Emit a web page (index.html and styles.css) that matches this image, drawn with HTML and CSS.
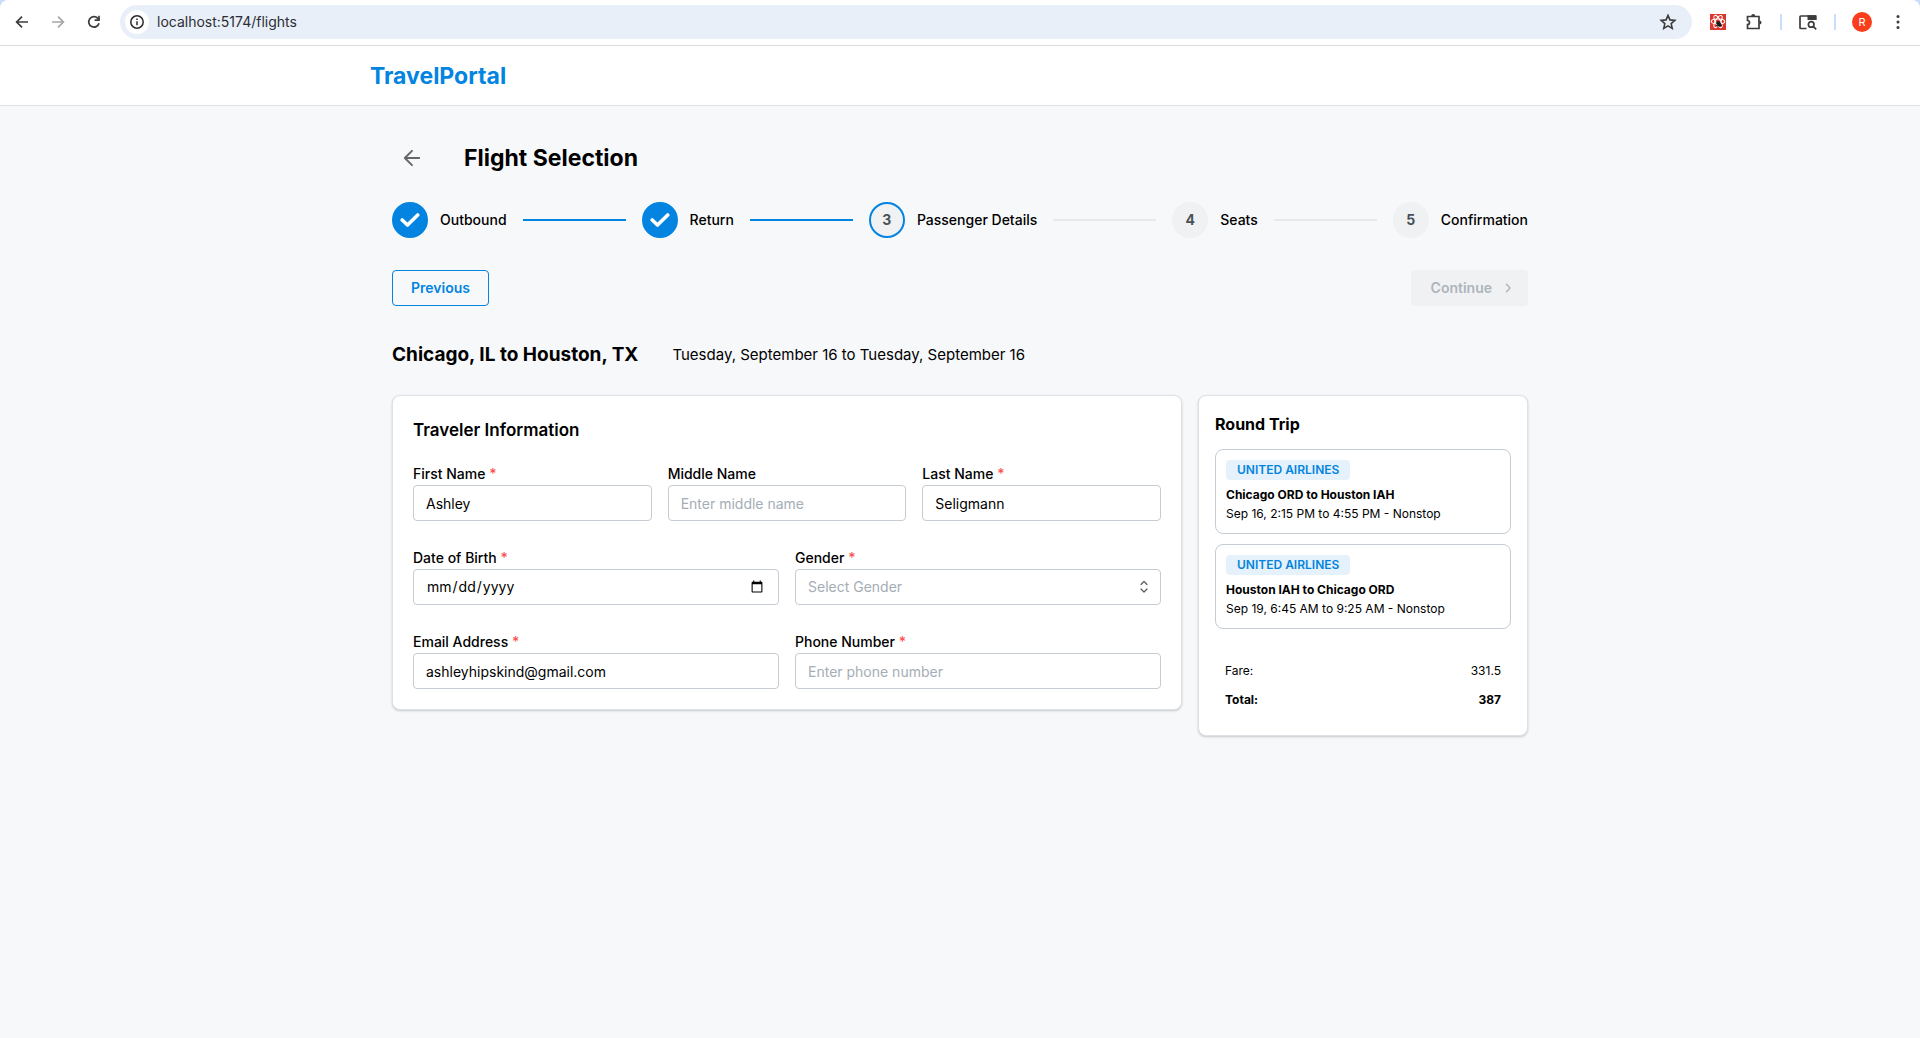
FILE: index.html
```html
<!DOCTYPE html>
<html lang="en">
<head>
<meta charset="utf-8">
<title>TravelPortal</title>
<meta name="viewport" content="width=device-width, initial-scale=1">
<link rel="stylesheet" href="styles.css">
</head>
<body>
<div class="frame">
<div class="toolbar">
  <button class="tool" type="button" aria-label="Back"><svg width="16" height="16" viewBox="0 0 16 16" fill="none" stroke="#3c3c3c" stroke-width="1.7"><path d="M14 8H3M8 2.6 2.6 8 8 13.4"/></svg></button>
  <button class="tool" type="button" aria-label="Forward"><svg width="16" height="16" viewBox="0 0 16 16" fill="none" stroke="#a6a6a6" stroke-width="1.7"><path d="M2 8h11M8 2.6 13.4 8 8 13.4"/></svg></button>
  <button class="tool" type="button" aria-label="Reload"><svg width="16" height="16" viewBox="0 0 16 16" fill="none" stroke="#3c3c3c" stroke-width="1.7"><path d="M13 9.2A5.2 5.2 0 1 1 11.8 4.4L13 5.6"/><path d="M13 1.8v4.4H8.6"/></svg></button>
  <div class="address">
    <button class="site-info" type="button" aria-label="Site information"><svg width="16" height="16" viewBox="0 0 16 16" fill="none" stroke="#2b2b2b" stroke-width="1.5"><circle cx="8" cy="8" r="6.2"/><path d="M8 7.2v4M8 4.4v1.6"/></svg></button>
    <input class="url" type="text" aria-label="Address" value="localhost:5174/flights">
    <button class="star" type="button" aria-label="Bookmark"><svg width="18" height="18" viewBox="0 0 18 18" fill="none" stroke="#3c3c3c" stroke-width="1.6"><path d="m9 2.400 1.950 4.500 4.900.45-3.700 3.250 1.100 4.800L9 12.900l-4.250 2.500 1.100-4.800-3.700-3.250 4.900-.45z"/></svg></button>
  </div>
  <div class="extensions">
    <button class="tool" type="button" aria-label="Extension"><svg width="16" height="16" viewBox="0 0 16 16"><path fill="#dc362e" d="M0 0h16v16H0z"/><g fill="none" stroke="#fff" stroke-width="1.100"><ellipse cx="8" cy="7.500" rx="6.800" ry="2.500"/><ellipse cx="8" cy="7.500" rx="6.800" ry="2.500" transform="rotate(60 8 7.500)"/><ellipse cx="8" cy="7.500" rx="6.800" ry="2.500" transform="rotate(120 8 7.500)"/></g><g stroke="#1c1c1c" fill="#1c1c1c"><ellipse cx="9" cy="10" rx="1.500" ry="2.500" transform="rotate(-40 9 10)"/><path d="m6 9 5.500 3M10 7.500 7.500 13M6 11.500h6M6.800 6.800l1.200 1.700" stroke-width=".8"/></g></svg></button>
    <button class="tool" type="button" aria-label="Extensions"><svg width="18" height="18" viewBox="0 0 18 18" fill="none" stroke="#3c3c3c" stroke-width="1.700"><path d="M2.500 3.500H14v12H2.500v-4a2 2 0 0 0 0-4z"/><path fill="#3c3c3c" stroke="none" d="M6.200 3a2 2 0 0 1 4 0zM14.500 7.500a2 2 0 0 1 0 4z"/></svg></button>
    <span class="divider"></span>
    <button class="tool" type="button" aria-label="Search tabs"><svg width="18" height="18" viewBox="0 0 18 18" fill="none" stroke="#3c3c3c" stroke-width="1.700"><path d="M7.500 15.500H1.800a.8.8 0 0 1-.8-.8V3.800a.8.8 0 0 1 .8-.8h14a.8.8 0 0 1 .8.8V7"/><path fill="#3c3c3c" stroke="none" d="M8.500 2.200h9V7h-9z"/><circle cx="12.200" cy="11.400" r="2.800"/><path d="m14.200 13.400 3 3"/></svg></button>
    <span class="divider"></span>
    <button class="avatar" type="button" aria-label="Profile">R</button>
    <button class="tool" type="button" aria-label="Menu"><svg width="16" height="16" viewBox="0 0 16 16" fill="#3c3c3c"><circle cx="8" cy="2.500" r="1.500"/><circle cx="8" cy="8" r="1.500"/><circle cx="8" cy="13.500" r="1.500"/></svg></button>
  </div>
</div>
</div>

<header class="site-header">
  <div class="container"><a class="brand" href="#">TravelPortal</a></div>
</header>

<main class="container page">
  <div class="page-title">
    <button class="back" type="button" aria-label="Go back"><svg width="24" height="24" viewBox="0 0 24 24" fill="none" stroke="#666" stroke-width="1.900" stroke-linecap="round" stroke-linejoin="round"><path d="M19.200 12H4.800M12 4.800 4.800 12l7.200 7.200"/></svg></button>
    <h1>Flight Selection</h1>
  </div>

  <ol class="steps">
    <li class="step done"><span class="dot"><svg width="20" height="16" viewBox="0 0 20 16" fill="none" stroke="#fff" stroke-width="3.600" stroke-linecap="round" stroke-linejoin="round"><path d="m2.200 8 5.300 5L17.700 3"/></svg></span>Outbound</li>
    <li class="step done"><span class="dot"><svg width="20" height="16" viewBox="0 0 20 16" fill="none" stroke="#fff" stroke-width="3.600" stroke-linecap="round" stroke-linejoin="round"><path d="m2.200 8 5.300 5L17.700 3"/></svg></span>Return</li>
    <li class="step current"><span class="dot">3</span>Passenger Details</li>
    <li class="step"><span class="dot">4</span>Seats</li>
    <li class="step"><span class="dot">5</span>Confirmation</li>
  </ol>

  <div class="actions">
    <button class="button outline" type="button">Previous</button>
    <button class="button" type="button" disabled>Continue <svg width="16" height="16" viewBox="0 0 16 16" fill="none" stroke="currentColor" stroke-width="1.400" stroke-linecap="round" stroke-linejoin="round"><path d="m6.500 4.200 3.500 3.800-3.500 3.800"/></svg></button>
  </div>

  <div class="route">
    <h2>Chicago, IL to Houston, TX</h2>
    <p>Tuesday, September 16 to Tuesday, September 16</p>
  </div>

  <div class="columns">
    <form class="card traveler">
      <h3>Traveler Information</h3>
      <div class="row">
        <div class="field"><label for="first">First Name <span class="req">*</span></label><input id="first" type="text" value="Ashley"></div>
        <div class="field"><label for="middle">Middle Name</label><input id="middle" type="text" placeholder="Enter middle name"></div>
        <div class="field"><label for="last">Last Name <span class="req">*</span></label><input id="last" type="text" value="Seligmann"></div>
      </div>
      <div class="row">
        <div class="field"><label for="dob">Date of Birth <span class="req">*</span></label><input id="dob" type="date"></div>
        <div class="field"><label for="gender">Gender <span class="req">*</span></label>
          <div class="select"><select id="gender" required><option value="" selected>Select Gender</option><option>Female</option><option>Male</option></select>
          <svg width="18" height="18" viewBox="0 0 18 18" fill="none" stroke="#555b61" stroke-width="1.200" stroke-linecap="round" stroke-linejoin="round"><path d="m6 6.500 3-3 3 3M6 11l3 3 3-3"/></svg></div></div>
      </div>
      <div class="row">
        <div class="field"><label for="email">Email Address <span class="req">*</span></label><input id="email" type="email" value="ashleyhipskind@gmail.com"></div>
        <div class="field"><label for="phone">Phone Number <span class="req">*</span></label><input id="phone" type="tel" placeholder="Enter phone number"></div>
      </div>
    </form>

    <aside class="card summary">
      <h3>Round Trip</h3>
      <section class="leg"><span class="badge">United Airlines</span><h4>Chicago ORD to Houston IAH</h4><p>Sep 16, 2:15 PM to 4:55 PM - Nonstop</p></section>
      <section class="leg"><span class="badge">United Airlines</span><h4>Houston IAH to Chicago ORD</h4><p>Sep 19, 6:45 AM to 9:25 AM - Nonstop</p></section>
      <dl class="fares">
        <div><dt>Fare:</dt><dd>331.5</dd></div>
        <div class="total"><dt>Total:</dt><dd>387</dd></div>
      </dl>
    </aside>
  </div>
</main>
</body>
</html>
```

FILE: styles.css
```css
:root {
  --blue: #0284e0;
  --border: #dee2e6;
  --input-border: #c5ccd3;
  --placeholder: #a5adb5;
}

* { box-sizing: border-box; }

body {
  margin: 0;
  background: #f7f8fa;
  color: #000;
  font: 14px/22px Inter, "Noto Sans", sans-serif;
}

h1, h2, h3, h4, p, ol, dl, dd { margin: 0; padding: 0; }
button, input, select { font: inherit; color: inherit; }
button { border: 0; padding: 0; background: none; }
svg { display: block; flex: none; }

.frame { background: #c9dcfa; }
.toolbar {
  display: flex;
  align-items: center;
  height: 46px;
  padding: 0 8px 2px;
  background: #fff;
  border-bottom: 1px solid #dadce0;
  border-radius: 8px 8px 0 0;
}
.tool {
  display: grid;
  place-items: center;
  width: 28px;
  height: 28px;
}
.toolbar > .tool { margin-right: 8px; }
.address {
  display: flex;
  flex: 1;
  align-items: center;
  height: 34px;
  margin-left: 4px;
  padding: 0 15px 0 5px;
  border-radius: 17px;
  background: #e9eff9;
}
.site-info {
  display: grid;
  place-items: center;
  width: 24px;
  height: 24px;
  border-radius: 50%;
  background: #fff;
}
.url {
  flex: 1;
  min-width: 0;
  padding: 0 8px;
  border: 0;
  background: none;
  color: #2b2e33;
}
.extensions {
  display: flex;
  align-items: center;
  margin-left: 12px;
}
.extensions .tool + .tool { margin-left: 8px; }
.divider {
  width: 2px;
  height: 16px;
  margin: 0 12px;
  background: #c9defa;
}
.avatar {
  width: 20px;
  height: 20px;
  margin: 0 12px 0 4px;
  border-radius: 50%;
  background: #fa3e1c;
  color: #fff;
  font-size: 11px;
  line-height: 20px;
}

.site-header {
  height: 60px;
  background: #fff;
  border-bottom: 1px solid var(--border);
}
.container {
  max-width: 1180px;
  margin: 0 auto;
}
.brand {
  color: var(--blue);
  font-size: 23px;
  font-weight: 700;
  line-height: 60px;
  text-decoration: none;
}

.page { padding: 32px 22px; }
.page-title {
  display: flex;
  align-items: center;
  gap: 32px;
}
.back {
  display: grid;
  place-items: center;
  width: 40px;
  height: 40px;
}
h1 { font-size: 23px; line-height: 40px; }

.steps {
  display: flex;
  align-items: center;
  gap: 16px;
  margin-top: 24px;
  list-style: none;
}
.step {
  display: flex;
  flex: 1 0 auto;
  align-items: center;
  gap: 12px;
  font-weight: 500;
  white-space: nowrap;
}
.step:last-child { flex: none; }
.step:not(:last-child)::after {
  content: "";
  flex: 1;
  height: 2px;
  margin-left: 4px;
  background: #e7e9eb;
}
.step.done::after { background: var(--blue); }
.dot {
  display: grid;
  place-items: center;
  width: 36px;
  height: 36px;
  border: 2px solid #f0f1f3;
  border-radius: 50%;
  background: #f0f1f3;
  color: #495057;
  font-weight: 700;
}
.current .dot { border-color: var(--blue); }
.done .dot { border-color: var(--blue); background: var(--blue); }

.actions {
  display: flex;
  justify-content: space-between;
  margin-top: 32px;
}
.button {
  display: flex;
  align-items: center;
  gap: 8px;
  height: 36px;
  padding: 0 12px 0 20px;
  border-radius: 4px;
  font-weight: 600;
}
.button:disabled { background: #f0f1f3; color: #adb5bd; }
.button.outline {
  padding: 0 18px;
  border: 1px solid var(--blue);
  color: var(--blue);
}

.route {
  display: flex;
  align-items: center;
  gap: 34px;
  margin-top: 32px;
}
h2 { font-size: 19px; line-height: 34px; }
.route p { font-size: 15px; }

.columns {
  display: grid;
  grid-template-columns: minmax(0, 1fr) 330px;
  align-items: start;
  gap: 16px;
  margin-top: 23px;
}
.card {
  border: 1px solid var(--border);
  border-radius: 8px;
  background: #fff;
  box-shadow: 0 1px 3px rgba(0, 0, 0, .1), 0 1px 2px rgba(0, 0, 0, .1);
}
.traveler { padding: 20px; }
.traveler h3 {
  font-size: 17px;
  font-weight: 600;
  line-height: 28px;
  margin-bottom: 19px;
}
.row {
  display: grid;
  grid-auto-flow: column;
  grid-auto-columns: minmax(0, 1fr);
  gap: 16px;
}
.row + .row { margin-top: 26px; }
.field label { display: block; font-weight: 500; }
.req { color: #fa5252; }
.field input, .field select {
  display: block;
  width: 100%;
  height: 36px;
  padding: 0 12px;
  border: 1px solid var(--input-border);
  border-radius: 4px;
  background: #fff;
}
.field input::placeholder { color: var(--placeholder); }
.select { position: relative; }
.select select { appearance: none; color: var(--placeholder); }
.select svg { position: absolute; top: 9px; right: 8px; pointer-events: none; }

.summary { padding: 16px; }
.summary h3 { font-size: 16px; line-height: 25px; margin-bottom: 12px; }
.leg {
  padding: 10px;
  border: 1px solid var(--input-border);
  border-radius: 8px;
  font-size: 12px;
  line-height: 19px;
}
.leg + .leg { margin-top: 10px; }
.leg h4 { font-size: 12px; }
.badge {
  display: block;
  width: fit-content;
  margin-bottom: 5px;
  padding: 0 11px;
  border-radius: 4px;
  background: #e5f1fb;
  color: var(--blue);
  font-size: 12px;
  font-weight: 600;
  line-height: 20px;
  text-transform: uppercase;
}
.fares {
  margin-top: 22px;
  padding: 10px;
  font-size: 12px;
  line-height: 19px;
}
.fares div { display: flex; justify-content: space-between; }
.total { margin-top: 10px; font-weight: 700; }
```
